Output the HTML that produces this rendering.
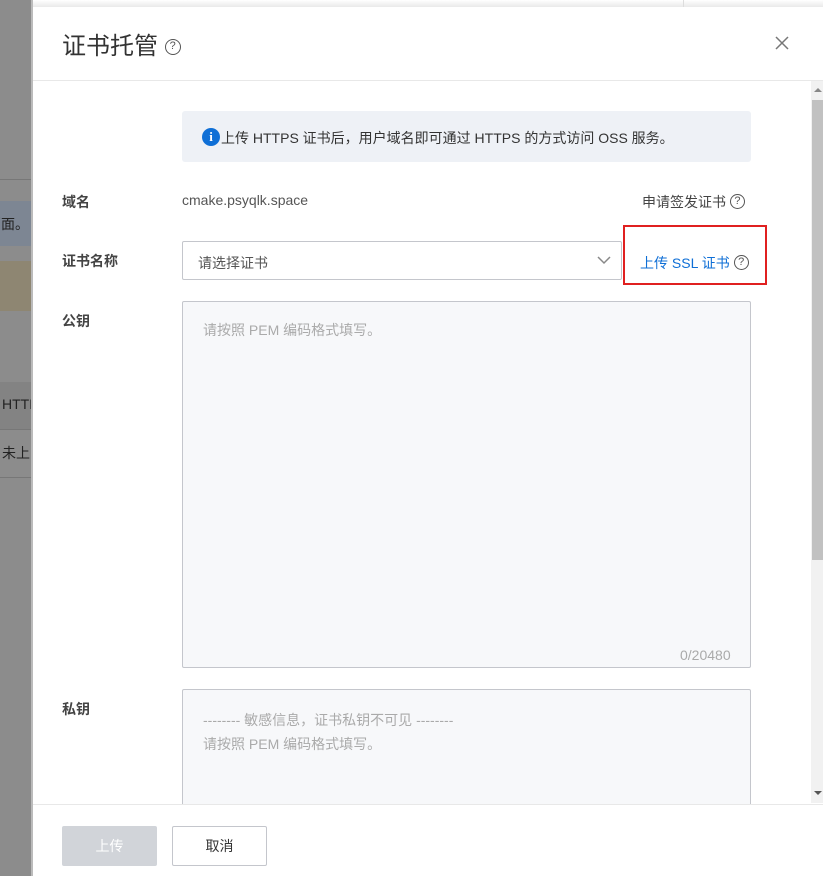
<!DOCTYPE html>
<html><head><meta charset="utf-8"><style>
*{box-sizing:border-box;margin:0;padding:0}
body{width:823px;height:876px;overflow:hidden;position:relative;background:#fff;font-family:"Liberation Sans","Noto Sans CJK SC",sans-serif;color:#333;font-size:14px}
.abs{position:absolute;white-space:nowrap}
.left{left:0;top:0;width:31px;height:876px;background:#8c8c8c;overflow:hidden}
.lbl{position:absolute;left:62px;font-size:14px;font-weight:bold;color:#444}
.q{display:inline-block;width:15px;height:15px;border:1.3px solid #555;border-radius:50%;font-size:11px;line-height:12px;text-align:center;color:#555;vertical-align:middle;position:relative;top:-2px;font-weight:normal}
.ta{position:absolute;left:182px;width:569px;background:#f7f8fa;border:1px solid #c4c6cc;border-radius:2px;color:#aaa;font-size:14px;padding:16px 20px;line-height:24px}
</style></head><body>
<div class="abs left">
 <div class="abs" style="top:179px;left:0;width:31px;height:1px;background:#777"></div>
 <div class="abs" style="top:201px;left:0;width:31px;height:45px;background:#7d8693"></div>
 <div class="abs" style="top:214px;left:-13px;font-size:14px;color:#222">页面。</div>
 <div class="abs" style="top:261px;left:0;width:31px;height:50px;background:#8e8672"></div>
 <div class="abs" style="top:382px;left:0;width:31px;height:47px;background:#838383"></div>
 <div class="abs" style="top:396px;left:2px;font-size:14px;color:#222">HTTPS</div>
 <div class="abs" style="top:429px;left:0;width:31px;height:1px;background:#777"></div>
 <div class="abs" style="top:443px;left:2px;font-size:14px;color:#222">未上</div>
 <div class="abs" style="top:477px;left:0;width:31px;height:1px;background:#777"></div>
</div>
<div class="abs" style="left:31px;top:0;width:2px;height:876px;background:#bbb"></div>
<div class="abs" style="left:33px;top:0;width:790px;height:7px;background:linear-gradient(#fff,#e9e9e9)"></div>
<div class="abs" style="left:683px;top:0;width:1px;height:7px;background:#ddd"></div>
<div class="abs" style="left:62px;top:26px;font-size:24px;color:#333">证书托管 <span class="q" style="width:16px;height:16px;font-size:11px;line-height:13px;top:-1px">?</span></div>
<svg class="abs" style="left:775px;top:36px" width="14" height="14"><path d="M1 1 L13 13 M13 1 L1 13" stroke="#777" stroke-width="1.5"/></svg>
<div class="abs" style="left:33px;top:80px;width:790px;height:1px;background:#e8e8e8"></div>
<div class="abs" style="left:811px;top:81px;width:12px;height:722px;background:#f1f1f1"></div>
<div class="abs" style="left:812px;top:100px;width:11px;height:460px;background:#c1c1c1"></div>
<div class="abs" style="left:814px;top:88px;width:0;height:0;border:4px solid transparent;border-bottom-color:#888;border-top:0"></div>
<div class="abs" style="left:814px;top:791px;width:0;height:0;border:4px solid transparent;border-top-color:#555;border-bottom:0"></div>

<div class="abs" style="left:182px;top:111px;width:569px;height:51px;background:#eef1f6;border-radius:3px"></div>
<div class="abs" style="left:202px;top:128px;width:18px;height:18px;border-radius:50%;background:#0f6fd6;color:#fff;font-weight:bold;font-size:13px;text-align:center;line-height:18px;font-family:'Liberation Serif',serif">i</div>
<div class="abs" style="left:221px;top:128px;font-size:14px;color:#333">上传 HTTPS 证书后，用户域名即可通过 HTTPS 的方式访问 OSS 服务。</div>

<div class="lbl" style="top:192px">域名</div>
<div class="abs" style="left:182px;top:192px;color:#555">cmake.psyqlk.space</div>
<div class="abs" style="left:642px;top:192px;color:#444">申请签发证书 <span class="q">?</span></div>

<div class="lbl" style="top:251px">证书名称</div>
<div class="abs" style="left:182px;top:241px;width:440px;height:39px;border:1px solid #c4c6cc;border-radius:2px"></div>
<div class="abs" style="left:198px;top:253px;color:#555">请选择证书</div>
<svg class="abs" style="left:596px;top:254px" width="16" height="12"><path d="M2 3 L8 9 L14 3" fill="none" stroke="#888" stroke-width="1.5"/></svg>
<div class="abs" style="left:623px;top:225px;width:144px;height:60px;border:2px solid #e02020"></div>
<div class="abs" style="left:640px;top:253px;color:#0f6fd6">上传 SSL 证书 <span class="q">?</span></div>

<div class="lbl" style="top:311px">公钥</div>
<div class="ta" style="top:301px;height:367px">请按照 PEM 编码格式填写。</div>
<div class="abs" style="left:680px;top:647px;color:#aaa">0/20480</div>

<div class="lbl" style="top:699px">私钥</div>
<div class="ta" style="top:689px;height:130px;padding-top:18px">-------- 敏感信息，证书私钥不可见 --------<br>请按照 PEM 编码格式填写。</div>

<div class="abs" style="left:33px;top:804px;width:790px;height:72px;background:#fff;border-top:1px solid #e8e8e8"></div>
<div class="abs" style="left:62px;top:826px;width:95px;height:40px;background:#d1d4d9;border-radius:2px;color:#fff;text-align:center;line-height:40px">上传</div>
<div class="abs" style="left:172px;top:826px;width:95px;height:40px;border:1px solid #c4c6cc;border-radius:2px;color:#333;text-align:center;line-height:38px">取消</div>
</body></html>
